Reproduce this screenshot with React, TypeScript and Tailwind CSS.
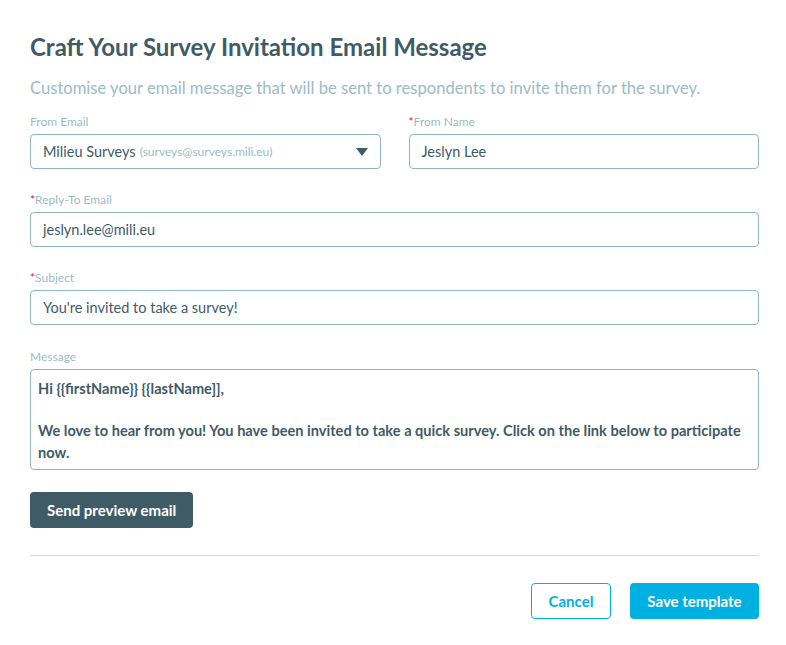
import React from 'react'

const FONT = { fontFamily: 'Lato, "Open Sans", sans-serif' }

function Label({ children, required }: { children: React.ReactNode; required?: boolean }) {
  return (
    <div className="mb-[5px] h-[14px] text-[12px] leading-[14px] text-[#9bbcc4]">
      {required && <span className="text-[#e02020]">*</span>}
      {children}
    </div>
  )
}

function TextInput({ value }: { value: string }) {
  return (
    <div className="flex h-[35px] items-center rounded-[4px] border border-[#8fb5bd] bg-white px-[12px] text-[14.5px] text-[#3f5b66]">
      {value}
    </div>
  )
}

export default function App() {
  return (
    <div className="min-h-[645px] w-[786px] bg-white pl-[30px] pr-[27px] pt-[31px]" style={FONT}>
      <h1 className="text-[24px] font-bold leading-[32px] text-[#3f5b66]">
        Craft Your Survey Invitation Email Message
      </h1>
      <p className="mt-[13px] text-[16.6px] leading-[24px] text-[#9bbcc4]">
        Customise your email message that will be sent to respondents to invite them for the survey.
      </p>

      <div className="mt-[15px] grid grid-cols-2 gap-x-[28px]">
        <div>
          <Label>From Email</Label>
          <div className="flex h-[35px] items-center rounded-[4px] border border-[#8fb5bd] bg-white pl-[12px] pr-[12px]">
            <span className="text-[14.5px] text-[#3f5b66]">Milieu Surveys</span>
            <span className="ml-[4px] text-[12px] text-[#9bbcc4]">(surveys@surveys.mili.eu)</span>
            <svg className="ml-auto" width="12" height="8" viewBox="0 0 12 8">
              <path d="M0 0h12L6 8z" fill="#3f5b66" />
            </svg>
          </div>
        </div>
        <div>
          <Label required>From Name</Label>
          <TextInput value="Jeslyn Lee" />
        </div>
      </div>

      <div className="mt-[24px]">
        <Label required>Reply-To Email</Label>
        <TextInput value="jeslyn.lee@mili.eu" />
      </div>

      <div className="mt-[24px]">
        <Label required>Subject</Label>
        <TextInput value="You're invited to take a survey!" />
      </div>

      <div className="mt-[25px]">
        <Label>Message</Label>
        <div className="h-[101px] rounded-[4px] border border-[#8fb5bd] bg-white px-[7px] pt-[8px] text-[14.6px] font-bold leading-[22px] text-[#3f5b66]">
          <div>Hi {'{{firstName}}'} {'{{lastName]]'},</div>
          <div className="h-[20px]" />
          <div>
            We love to hear from you! You have been invited to take a quick survey. Click on the link below to participate now.
          </div>
        </div>
      </div>

      <button className="mt-[22px] h-[36px] rounded-[4px] bg-[#3f5b66] px-[17px] text-[15px] font-bold text-white">
        Send preview email
      </button>

      <div className="mt-[27px] h-px bg-[#cfe0e4]" />

      <div className="mt-[27px] flex justify-end gap-[19px]">
        <button className="h-[36px] w-[80px] rounded-[4px] border border-[#00b0e0] bg-white text-[15px] font-bold text-[#00b0e0]">
          Cancel
        </button>
        <button className="h-[36px] w-[129px] rounded-[4px] bg-[#00b0e0] text-[15px] font-bold text-white">
          Save template
        </button>
      </div>
    </div>
  )
}
